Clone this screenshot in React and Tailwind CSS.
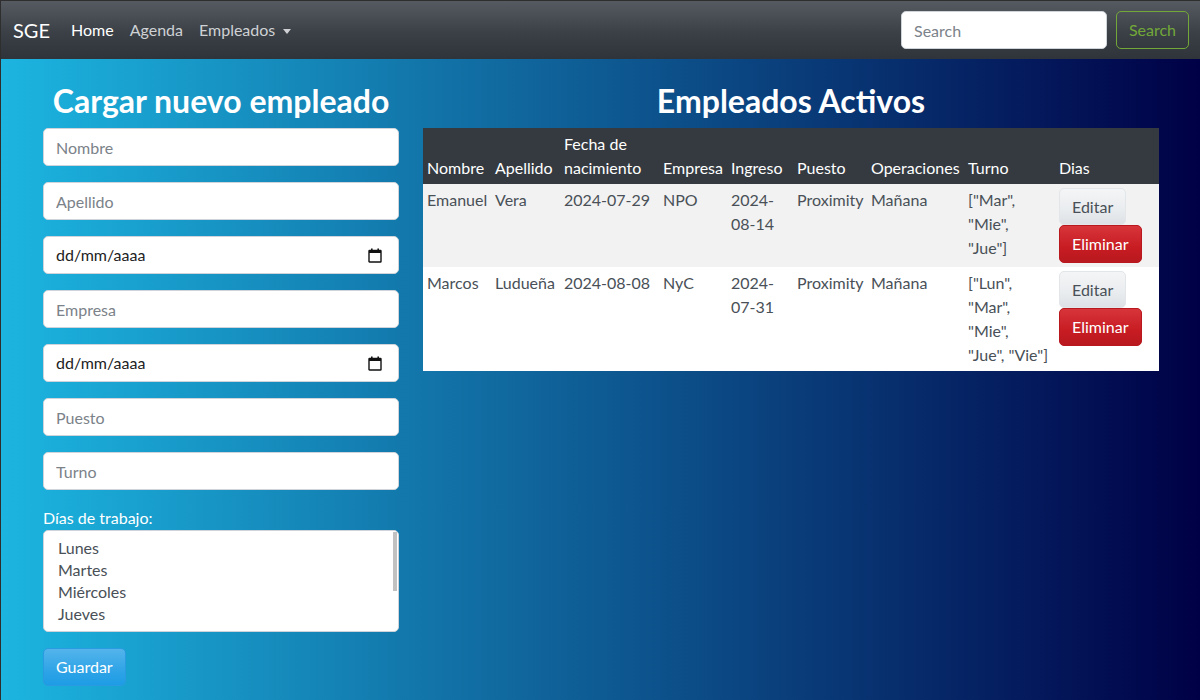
import React from 'react';

const empleados = [
  {
    nombre: 'Emanuel',
    apellido: 'Vera',
    nacimiento: '2024-07-29',
    empresa: 'NPO',
    ingreso: '2024-08-14',
    puesto: 'Proximity',
    turno: 'Mañana',
    dias: ['["Mar",', '"Mie",', '"Jue"]'],
  },
  {
    nombre: 'Marcos',
    apellido: 'Ludueña',
    nacimiento: '2024-08-08',
    empresa: 'NyC',
    ingreso: '2024-07-31',
    puesto: 'Proximity',
    turno: 'Mañana',
    dias: ['["Lun",', '"Mar",', '"Mie",', '"Jue", "Vie"]'],
  },
];

const headers = ['Nombre', 'Apellido', 'Fecha de nacimiento', 'Empresa', 'Ingreso', 'Puesto', 'Operaciones', 'Turno', 'Dias'];

const CalendarIcon = () => (
  <svg width="14" height="15" viewBox="0 0 14 15" fill="none">
    <rect x="1" y="2.5" width="12" height="11.5" rx="0.5" stroke="#111" strokeWidth="1.4" />
    <rect x="1" y="2.5" width="12" height="2.5" fill="#111" />
    <rect x="3" y="0.5" width="1.6" height="3" fill="#111" />
    <rect x="9.4" y="0.5" width="1.6" height="3" fill="#111" />
  </svg>
);

const TextInput = ({ placeholder }) => (
  <input
    type="text"
    placeholder={placeholder}
    className="block h-[38px] w-full rounded-[5px] border border-[#ced4da] bg-white px-3 text-base text-[#495057] placeholder:text-[#7b8289] outline-none"
  />
);

const DateInput = () => (
  <div className="flex h-[38px] w-full items-center justify-between rounded-[5px] border border-[#ced4da] bg-white pl-3 pr-[16px] text-base text-[#222]">
    <span>dd/mm/aaaa</span>
    <CalendarIcon />
  </div>
);

function Navbar() {
  return (
    <nav className="flex h-[58px] items-center justify-between bg-[linear-gradient(#565b62,#3a4046_55%,#2f343a)] pl-3 pr-[11px]">
      <div className="flex items-center">
        <span className="mr-[21px] text-[20px] text-white">SGE</span>
        <div className="flex items-center gap-4 text-base">
          <a className="text-white">Home</a>
          <a className="text-[#cfd1d4]">Agenda</a>
          <a className="flex items-center text-[#cfd1d4]">
            Empleados
            <span className="ml-[8px] mt-[2px] inline-block h-0 w-0 border-x-[4px] border-t-[5px] border-x-transparent border-t-[#cfd1d4]" />
          </a>
        </div>
      </div>
      <div className="flex items-center gap-[9px]">
        <input
          type="text"
          placeholder="Search"
          className="h-[38px] w-[206px] rounded-[5px] border border-[#ced4da] bg-white px-3 text-base placeholder:text-[#7b8289] outline-none"
        />
        <button className="h-[38px] w-[73px] rounded-[5px] border border-[#73a839] text-base text-[#73a839]">Search</button>
      </div>
    </nav>
  );
}

function FormCol() {
  // only the rows that show in the list box; the rest sit below its scroll
  const dias = ['Lunes', 'Martes', 'Miércoles', 'Jueves', 'Viernes'];
  return (
    <div className="w-[356px] shrink-0">
      <h2 className="mb-2 whitespace-nowrap text-center text-[32px] font-bold leading-[38px] text-white">Cargar nuevo empleado</h2>
      <div className="flex flex-col gap-4">
        <TextInput placeholder="Nombre" />
        <TextInput placeholder="Apellido" />
        <DateInput />
        <TextInput placeholder="Empresa" />
        <DateInput />
        <TextInput placeholder="Puesto" />
        <TextInput placeholder="Turno" />
      </div>
      <label className="mt-4 block text-base leading-6 text-white">Días de trabajo:</label>
      <div className="relative h-[102px] overflow-hidden rounded-[5px] border border-[#ced4da] bg-white pl-[14px] pt-[6px] text-base leading-[22px] text-[#495057]">
        {dias.map((d) => (
          <div key={d}>{d}</div>
        ))}
        <div className="absolute right-[1px] top-[1px] h-[59px] w-[4px] bg-[#c1c1c1]" />
      </div>
      <button className="mt-4 h-[38px] rounded-[5px] border border-[#2a9be0] bg-[linear-gradient(#54b4eb,#2fa4e7_60%,#1d9ce5)] px-3 text-base text-white">
        Guardar
      </button>
    </div>
  );
}

function TableCol() {
  return (
    <div className="w-[736px] shrink-0">
      <h2 className="mb-2 text-center text-[32px] font-bold leading-[38px] text-white">Empleados Activos</h2>
      <table className="w-full table-fixed border-collapse text-base leading-6 text-[#495057]">
        <colgroup>
          <col className="w-[68px]" />
          <col className="w-[69px]" />
          <col className="w-[99px]" />
          <col className="w-[68px]" />
          <col className="w-[66px]" />
          <col className="w-[74px]" />
          <col className="w-[97px]" />
          <col className="w-[91px]" />
          <col className="w-[104px]" />
        </colgroup>
        <thead>
          <tr className="bg-[#343a40] text-white">
            {headers.map((h) => (
              <th key={h} className="p-[4px] text-left align-bottom font-normal">
                {h}
              </th>
            ))}
          </tr>
        </thead>
        <tbody>
          {empleados.map((e, i) => (
            <tr key={e.nombre} className={i % 2 === 0 ? 'bg-[#f2f2f2]' : 'bg-white'}>
              <td className="p-[4px] align-top whitespace-nowrap">{e.nombre}</td>
              <td className="p-[4px] align-top whitespace-nowrap">{e.apellido}</td>
              <td className="p-[4px] align-top whitespace-nowrap">{e.nacimiento}</td>
              <td className="p-[4px] align-top">{e.empresa}</td>
              <td className="p-[4px] align-top">{e.ingreso}</td>
              <td className="p-[4px] align-top whitespace-nowrap">{e.puesto}</td>
              <td className="p-[4px] align-top">{e.turno}</td>
              <td className="p-[4px] align-top whitespace-nowrap">
                {e.dias.map((line) => (
                  <div key={line}>{line}</div>
                ))}
              </td>
              <td className="p-[4px] align-top">
                <div className="flex flex-col items-start">
                  <button className="h-[37px] rounded-[5px] border border-[#e3e6e9] bg-[linear-gradient(#f4f5f6,#e9ecef_60%,#dde1e5)] px-3 text-[#495057]">
                    Editar
                  </button>
                  <button className="h-[38px] rounded-[5px] border border-[#b8181e] bg-[linear-gradient(#d7353b,#c71c22_60%,#b8191f)] px-3 text-white">
                    Eliminar
                  </button>
                </div>
              </td>
            </tr>
          ))}
        </tbody>
      </table>
    </div>
  );
}

export default function App() {
  return (
    <div className="min-h-screen border-l border-t border-[#2e2e2e] bg-[linear-gradient(to_right,#1cb5e0,#000046)] font-['Lato',sans-serif]">
      <Navbar />
      <main className="flex gap-6 pl-[42px] pt-[23px]">
        <FormCol />
        <TableCol />
      </main>
    </div>
  );
}
